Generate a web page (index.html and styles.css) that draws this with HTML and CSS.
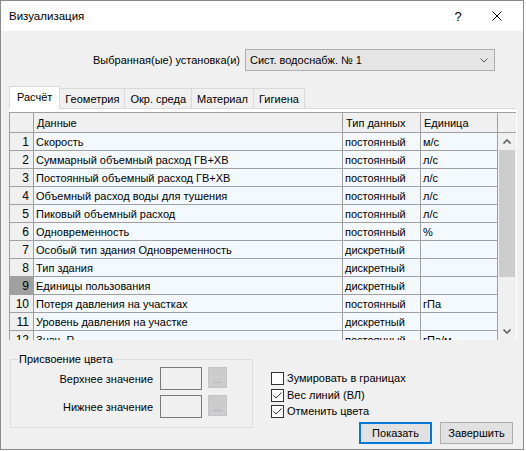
FILE: index.html
```html
<!DOCTYPE html>
<html lang="ru">
<head>
<meta charset="utf-8">
<title>Визуализация</title>
<link rel="stylesheet" href="styles.css">
</head>
<body>
<div class="window">
  <div class="titlebar">
    <span class="title">Визуализация</span>
    <span class="help">?</span>
    <span class="close"><svg width="10" height="10" viewBox="0 0 10 10"><path d="M0.5 0.5 L9.5 9.5 M9.5 0.5 L0.5 9.5" stroke="#000" stroke-width="1" fill="none"/></svg></span>
  </div>

  <div class="selector">
    <span class="sel-label">Выбранная(ые) установка(и)</span>
    <div class="combo">
      <span>Сист. водоснабж. № 1</span>
      <svg class="chev" width="8" height="5" viewBox="0 0 8 5"><path d="M0.5 0.5 L4 4 L7.5 0.5" stroke="#555" stroke-width="1" fill="none"/></svg>
    </div>
  </div>

  <div class="tabs">
    <div class="tab active">Расчёт</div>
    <div class="tab">Геометрия</div>
    <div class="tab">Окр. среда</div>
    <div class="tab">Материал</div>
    <div class="tab">Гигиена</div>
  </div>

  <div class="page">
    <div class="grid">
      <div class="grid-main">
        <div class="row head"><div class="c num"></div><div class="c">Данные</div><div class="c">Тип данных</div><div class="c">Единица</div></div>
        <div class="row"><div class="c num">1</div><div class="c">Скорость</div><div class="c t">постоянный</div><div class="c t">м/с</div></div>
        <div class="row"><div class="c num">2</div><div class="c">Суммарный объемный расход ГВ+ХВ</div><div class="c t">постоянный</div><div class="c t">л/с</div></div>
        <div class="row"><div class="c num">3</div><div class="c">Постоянный объемный расход ГВ+ХВ</div><div class="c t">постоянный</div><div class="c t">л/с</div></div>
        <div class="row"><div class="c num">4</div><div class="c">Объемный расход воды для тушения</div><div class="c t">постоянный</div><div class="c t">л/с</div></div>
        <div class="row"><div class="c num">5</div><div class="c">Пиковый объемный расход</div><div class="c t">постоянный</div><div class="c t">л/с</div></div>
        <div class="row"><div class="c num">6</div><div class="c">Одновременность</div><div class="c t">постоянный</div><div class="c t">%</div></div>
        <div class="row"><div class="c num">7</div><div class="c">Особый тип здания Одновременность</div><div class="c t">дискретный</div><div class="c t"></div></div>
        <div class="row"><div class="c num">8</div><div class="c">Тип здания</div><div class="c t">дискретный</div><div class="c t"></div></div>
        <div class="row"><div class="c num sel">9</div><div class="c">Единицы пользования</div><div class="c t">дискретный</div><div class="c t"></div></div>
        <div class="row"><div class="c num">10</div><div class="c">Потеря давления на участках</div><div class="c t">постоянный</div><div class="c t">гПа</div></div>
        <div class="row"><div class="c num">11</div><div class="c">Уровень давления на участке</div><div class="c t">дискретный</div><div class="c t"></div></div>
        <div class="row"><div class="c num">12</div><div class="c">Знач. R</div><div class="c t">постоянный</div><div class="c t">гПа/м</div></div>
      </div>
      <div class="vcol">
        <div class="head-stub"></div>
        <div class="vscroll">
          <div class="arrow"><svg width="8" height="5" viewBox="0 0 8 5"><path d="M0.5 4.5 L4 1 L7.5 4.5" stroke="#606060" stroke-width="1.6" fill="none"/></svg></div>
          <div class="thumb"></div>
          <div class="track"></div>
          <div class="arrow"><svg width="8" height="5" viewBox="0 0 8 5"><path d="M0.5 0.5 L4 4 L7.5 0.5" stroke="#606060" stroke-width="1.6" fill="none"/></svg></div>
        </div>
      </div>
    </div>
  </div>

  <div class="bottom">
    <fieldset class="colors">
      <legend>Присвоение цвета</legend>
      <div class="crow">
        <span class="clabel">Верхнее значение</span>
        <span class="swatch"></span>
        <span class="dots">...</span>
      </div>
      <div class="crow">
        <span class="clabel">Нижнее значение</span>
        <span class="swatch"></span>
        <span class="dots">...</span>
      </div>
    </fieldset>
    <div class="right">
      <div class="checks">
        <div class="check"><span class="box"></span><span>Зумировать в границах</span></div>
        <div class="check"><span class="box"><svg width="11" height="11" viewBox="0 0 11 11"><path d="M1.5 5.5 L4 8 L9.5 2.5" stroke="#333" stroke-width="1" fill="none"/></svg></span><span>Вес линий (ВЛ)</span></div>
        <div class="check"><span class="box"><svg width="11" height="11" viewBox="0 0 11 11"><path d="M1.5 5.5 L4 8 L9.5 2.5" stroke="#333" stroke-width="1" fill="none"/></svg></span><span>Отменить цвета</span></div>
      </div>
      <div class="buttons">
        <button class="btn primary">Показать</button>
        <button class="btn">Завершить</button>
      </div>
    </div>
  </div>
</div>
</body>
</html>
```
FILE: styles.css
```css
* { box-sizing: border-box; }
html, body { margin: 0; padding: 0; }
body {
  background: #ffffff;
  font-family: "Liberation Sans", Arial, sans-serif;
  font-size: 11px;
  color: #000;
}
.window {
  width: 524px;
  height: 450px;
  border: 1px solid #8a8a8a;
  background: #f0f0f0;
  display: flex;
  flex-direction: column;
  overflow: hidden;
}
.titlebar {
  height: 30px;
  flex: none;
  background: #fff;
  display: flex;
  align-items: center;
  padding-left: 8px;
  font-size: 11.5px;
}
.title { flex: 1; }
.help { width: 20px; text-align: center; margin-right: 19px; font-size: 13px; }
.close { width: 20px; height: 10px; display: flex; justify-content: center; margin-right: 16px; }

.selector {
  margin-top: 18px;
  display: flex;
  align-items: center;
  justify-content: flex-end;
  padding-right: 28px;
}
.sel-label { margin-right: 5px; }
.combo {
  width: 250px;
  height: 22px;
  border: 1px solid #adadad;
  background: #e5e5e5;
  display: flex;
  align-items: center;
  padding-left: 4px;
  padding-right: 6px;
}
.combo span { flex: 1; }

.tabs {
  margin-top: 15px;
  height: 22px;
  display: flex;
  align-items: flex-end;
  padding-left: 8px;
}
.tab {
  height: 20px;
  padding: 0 5px;
  border: 1px solid #d9d9d9;
  border-bottom: none;
  border-left: none;
  background: #f0f0f0;
  display: flex;
  align-items: center;
  line-height: 16px;
}
.tab.active {
  height: 23px;
  margin-bottom: -1px;
  position: relative;
  z-index: 1;
  background: #fff;
  border-left: 1px solid #d9d9d9;
  padding: 0 7px 3px;
}
.page {
  margin: 0 6px 0 8px;
  height: 232px;
  background: #fff;
  border-top: 1px solid #d9d9d9;
  padding-top: 3px;
}
.grid {
  width: 507px;
  height: 228px;
  display: flex;
  overflow: hidden;
  border-left: 1px solid #a0a0a0;
  border-top: 1px solid #a0a0a0;
}
.grid-main { width: 488px; flex: none; }
.row {
  display: grid;
  grid-template-columns: 24px 309px 78px 77px;
  height: 18px;
}
.row.head { height: 20px; }
.c {
  border-right: 1px solid #a0a0a0;
  border-bottom: 1px solid #a0a0a0;
  background: #f3f9ff;
  padding-left: 2px;
  line-height: 16px;
  white-space: nowrap;
  overflow: hidden;
  display: flex;
  align-items: center;
}
.head .c { background: #f0f0f0; padding-left: 3px; }
.c.num {
  background: #f0f0f0;
  justify-content: flex-end;
  padding-right: 4px;
  font-size: 12px;
}
.c.num.sel { background: #a0a0a0; }
.c.t {
  font-size: 11px;
}
.vcol { width: 18px; flex: none; display: flex; flex-direction: column; }
.head-stub {
  height: 20px;
  background: #f0f0f0;
  border-bottom: 1px solid #a0a0a0;
}
.vscroll {
  flex: 1;
  background: #f0f0f0;
  display: flex;
  flex-direction: column;
  padding: 0 1px;
}
.arrow {
  height: 17px;
  flex: none;
  display: flex;
  align-items: center;
  justify-content: center;
}
.thumb { height: 127px; background: #cdcdcd; flex: none; }
.track { flex: 1; }

.bottom { display: flex; align-items: flex-start; }
.colors {
  margin: 11px 0 0 9px;
  width: 243px;
  border: 1px solid #dcdcdc;
  padding: 0 0 9px 0;
  min-width: 0;
}
.colors legend {
  margin-left: 7px;
  padding: 0 1px;
  line-height: 16px;
}
.crow {
  display: flex;
  align-items: center;
  height: 23px;
}
.crow + .crow { margin-top: 5px; }
.clabel { width: 142px; text-align: right; margin-right: 7px; }
.swatch {
  width: 42px;
  height: 23px;
  border: 1px solid #7a7a7a;
  background: #f0f0f0;
}
.dots {
  width: 19px;
  height: 21px;
  margin-left: 6px;
  background: #cccccc;
  border: 1px solid #c4c4c4;
  color: #9a98ad;
  font-size: 11px;
  text-align: center;
  line-height: 22px;
  align-self: flex-start;
}
.right {
  flex: 1;
  margin-left: 18px;
  margin-top: 30px;
  padding-right: 10px;
  display: flex;
  flex-direction: column;
}
.check {
  height: 16.5px;
  display: flex;
  align-items: flex-start;
  line-height: 16px;
}
.box {
  width: 13px;
  height: 13px;
  margin-top: 2px;
  border: 1px solid #333;
  background: #fff;
  display: flex;
  align-items: center;
  justify-content: center;
  margin-right: 3px;
  flex: none;
}
.box svg { display: block; }
.buttons {
  margin-top: 2.5px;
  display: flex;
  justify-content: flex-end;
}
.btn {
  width: 73px;
  height: 22px;
  background: #e1e1e1;
  border: 1px solid #adadad;
  font-family: "Liberation Sans", Arial, sans-serif;
  font-size: 11px;
  color: #000;
  padding: 0;
  margin: 0;
}
.btn.primary { border: 2px solid #0078d7; }
.btn + .btn { margin-left: 8px; }
```
